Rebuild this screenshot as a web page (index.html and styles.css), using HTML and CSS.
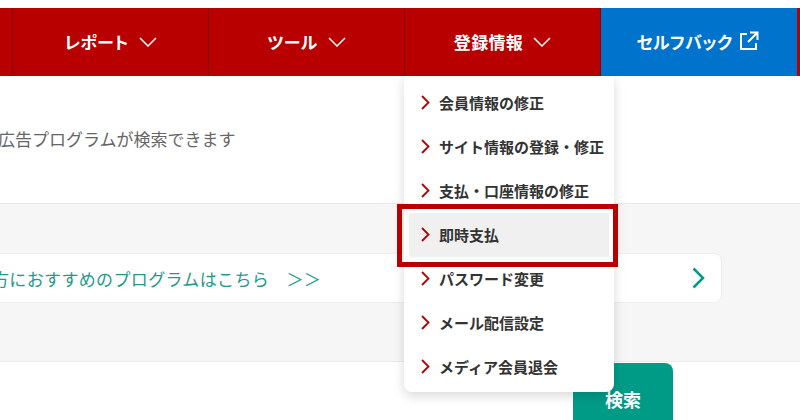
FILE: index.html
```html
<!DOCTYPE html>
<html lang="ja">
  <head>
    <meta charset="UTF-8" />
    <meta name="viewport" content="width=device-width, initial-scale=1.0" />
    <title>メニュー</title>
    <link rel="stylesheet" href="styles.css">
  </head>
  <body>
    <nav class="global-nav">
      <div class="nav-stub"></div>
      <a class="nav-item">レポート
        <svg class="nav-arrow" viewBox="0 0 18 10"><path d="M1 1l8 8 8-8" /></svg>
      </a>
      <a class="nav-item">ツール
        <svg class="nav-arrow" viewBox="0 0 18 10"><path d="M1 1l8 8 8-8" /></svg>
      </a>
      <a class="nav-item nav-item-open">登録情報
        <svg class="nav-arrow" viewBox="0 0 18 10"><path d="M1 1l8 8 8-8" /></svg>
        <ul class="dropdown">
          <li class="dropdown-item"><svg class="item-arrow" viewBox="0 0 9 15"><path d="M1 1l6.500 6.500-6.500 6.500" /></svg>会員情報の修正</li>
          <li class="dropdown-item"><svg class="item-arrow" viewBox="0 0 9 15"><path d="M1 1l6.500 6.500-6.500 6.500" /></svg>サイト情報の登録・修正</li>
          <li class="dropdown-item"><svg class="item-arrow" viewBox="0 0 9 15"><path d="M1 1l6.500 6.500-6.500 6.500" /></svg>支払・口座情報の修正</li>
          <li class="dropdown-item dropdown-item-hover"><svg class="item-arrow" viewBox="0 0 9 15"><path d="M1 1l6.500 6.500-6.500 6.500" /></svg>即時支払</li>
          <li class="dropdown-item"><svg class="item-arrow" viewBox="0 0 9 15"><path d="M1 1l6.500 6.500-6.500 6.500" /></svg>パスワード変更</li>
          <li class="dropdown-item"><svg class="item-arrow" viewBox="0 0 9 15"><path d="M1 1l6.500 6.500-6.500 6.500" /></svg>メール配信設定</li>
          <li class="dropdown-item"><svg class="item-arrow" viewBox="0 0 9 15"><path d="M1 1l6.500 6.500-6.500 6.500" /></svg>メディア会員退会</li>
        </ul>
        <div class="highlight-box"></div>
      </a>
      <a class="nav-item nav-item-blue">セルフバック
        <svg class="nav-external" viewBox="0 0 20 20"><path d="M8 3H2v15h15v-6M11 1.500h7.500V9M18 2l-9 9" /></svg>
      </a>
      <div class="nav-end"></div>
    </nav>

    <section class="intro">
      <p class="intro-text">広告プログラムが検索できます</p>
    </section>

    <section class="band">
      <a class="band-card">
        <span class="band-text">方におすすめのプログラムはこちら　＞＞</span>
        <svg class="band-arrow" viewBox="0 0 13 22"><path d="M1.500 1.500l9.500 9.500-9.500 9.500" /></svg>
      </a>
    </section>

    <section class="search">
      <button class="search-button">検索</button>
    </section>
  </body>
</html>
```

FILE: styles.css
```css
html, body {
  height: 420px;
  overflow: hidden;
}
body {
  margin: 0;
  padding-top: 8px;
  box-sizing: border-box;
  background-color: white;
  font-family: "Noto Sans CJK JP", "Noto Sans", sans-serif;
}

/* nav */
.global-nav {
  display: flex;
  height: 68px;
  background-color: #b80000;
}
.nav-stub {
  width: 13px;
  box-sizing: border-box;
  border-right: 1px solid #8c0000;
}
.nav-item {
  position: relative;
  width: 196px;
  flex: none;
  box-sizing: border-box;
  display: flex;
  justify-content: center;
  align-items: center;
  padding-bottom: 2px;
  border-right: 1px solid #8c0000;
  color: white;
  font-size: 17px;
  font-weight: 700;
  letter-spacing: 0.02em;
  font-feature-settings: "palt";
}
.nav-arrow {
  width: 18px;
  height: 10px;
  margin-left: 10px;
  margin-top: 2px;
  fill: none;
  stroke: white;
  stroke-width: 1.500;
}
.nav-item-blue {
  padding-right: 3px;
  border-right: none;
  background-color: #0074cc;
}
.nav-external {
  width: 20px;
  height: 20px;
  margin-left: 6px;
  fill: none;
  stroke: white;
  stroke-width: 2;
}
.nav-end {
  flex: 1;
}

/* dropdown */
.dropdown {
  position: absolute;
  top: 68px;
  left: -1px;
  width: 210px;
  margin: 0;
  padding: 5px 5px 3px;
  box-sizing: border-box;
  list-style: none;
  background-color: white;
  border-radius: 0 0 8px 8px;
  box-shadow: 0 4px 12px rgba(0, 0, 0, 0.15);
  z-index: 2;
}
.dropdown-item {
  display: flex;
  align-items: center;
  height: 44px;
  box-sizing: border-box;
  padding-left: 12px;
  padding-bottom: 1px;
  border-radius: 2px;
  color: #333;
  font-size: 15px;
  font-weight: 700;
  letter-spacing: 0;
  font-feature-settings: normal;
  white-space: nowrap;
}
.dropdown-item-hover {
  background-color: #f0f0f0;
}
.item-arrow {
  width: 9px;
  height: 15px;
  margin-right: 9px;
  fill: none;
  stroke: #b80000;
  stroke-width: 1.800;
}
.highlight-box {
  position: absolute;
  top: 196px;
  left: -8px;
  width: 221px;
  height: 63px;
  box-sizing: border-box;
  border: 5px solid #b80000;
  z-index: 3;
}

/* intro */
.intro {
  display: flex;
  align-items: center;
  height: 127px;
  padding-bottom: 3px;
  box-sizing: border-box;
}
.intro-text {
  margin: 0 0 0 -2px;
  color: #666;
  font-size: 17px;
  white-space: nowrap;
}

/* band */
.band {
  height: 159px;
  box-sizing: border-box;
  padding: 49px 78px 0 0;
  border-top: 1px solid #ebebeb;
  border-bottom: 1px solid #ebebeb;
  background-color: #f6f6f6;
}
.band-card {
  display: flex;
  justify-content: space-between;
  align-items: center;
  height: 50px;
  box-sizing: border-box;
  padding-right: 16px;
  background-color: white;
  border: 1px solid #eee;
  border-left: none;
  border-radius: 0 8px 8px 0;
  overflow: hidden;
}
.band-text {
  margin-left: -8px;
  color: #23998a;
  font-size: 17px;
  letter-spacing: 0.35px;
  white-space: nowrap;
}
.band-arrow {
  width: 13px;
  height: 22px;
  fill: none;
  stroke: #009b87;
  stroke-width: 2.500;
}

/* search */
.search {
  display: flex;
  justify-content: flex-end;
  padding-top: 1px;
  padding-right: 127px;
}
.search-button {
  width: 100px;
  height: 72px;
  padding: 0;
  border: none;
  border-radius: 8px 8px 0 0;
  background-color: #009b87;
  color: white;
  font-family: inherit;
  font-size: 18px;
  font-weight: 700;
}
```
